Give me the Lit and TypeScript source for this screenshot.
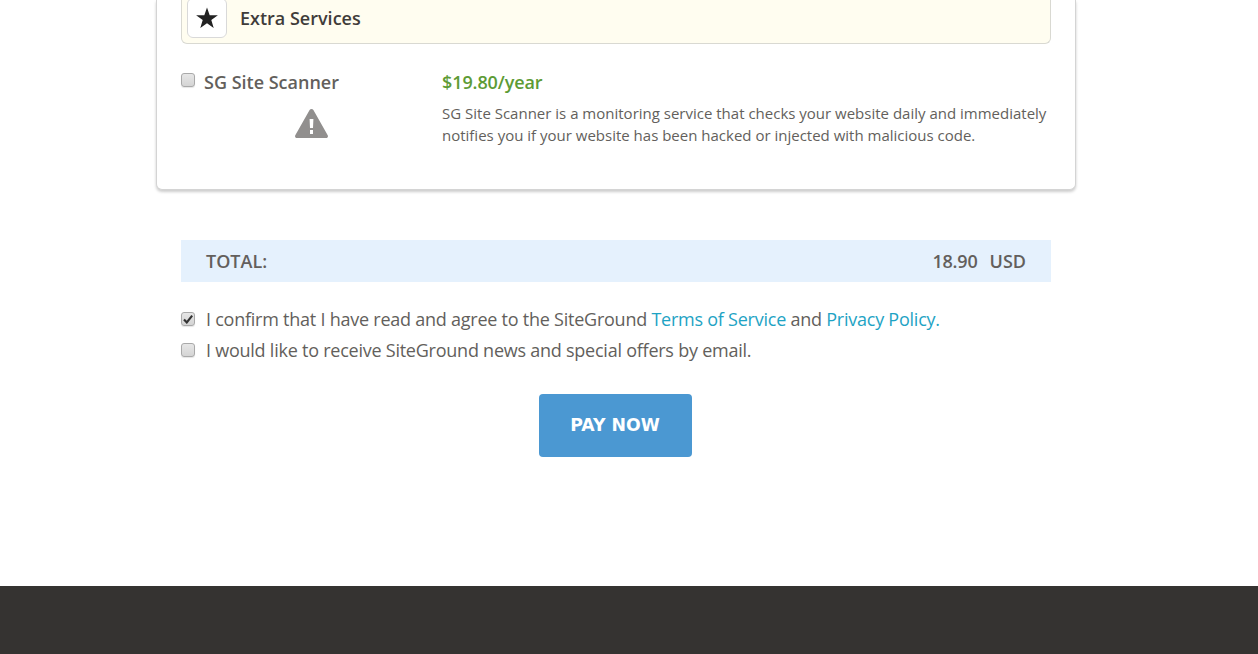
import { LitElement, html, css } from 'lit';
import { customElement } from 'lit/decorators.js';

const box = (checked = false) => html`
  <span class="box">
    ${checked
      ? html`<svg width="10" height="10" viewBox="0 0 10 10"><path d="M1 5.4 L3.8 8.4 L9.2 1.6" fill="none" stroke="#333" stroke-width="2.2"/></svg>`
      : ''}
  </span>
`;

@customElement('app-root')
export class AppRoot extends LitElement {
  static styles = css`
    :host {
      display: block;
      height: 654px;
      overflow: hidden;
      background: #fff;
      color: #635f5c;
      font-family: 'Open Sans', 'DejaVu Sans', sans-serif;
    }
    .page {
      display: flex;
      flex-direction: column;
      height: 654px;
    }
    .main {
      flex: 1;
      width: 870px;
      margin-left: 181px;
    }
    .card {
      box-sizing: border-box;
      width: 920px;
      height: 190px;
      margin-left: -25px;
      padding: 0 24px;
      background: #fff;
      border: 1px solid #d4d4d4;
      border-top: 0;
      border-radius: 0 0 6px 6px;
      box-shadow: 0 2px 3px rgba(0, 0, 0, 0.2);
    }
    .extra {
      box-sizing: border-box;
      display: flex;
      align-items: flex-end;
      gap: 13px;
      width: 870px;
      height: 44px;
      padding: 0 5px 5px;
      background: #fffdf0;
      border: 1px solid #d9d9d2;
      border-top: 0;
      border-radius: 0 0 6px 6px;
      overflow: hidden;
    }
    .star {
      box-sizing: border-box;
      flex: none;
      display: flex;
      align-items: center;
      justify-content: center;
      width: 40px;
      height: 40px;
      background: #fff;
      border: 1px solid #d9d9d9;
      border-radius: 6px;
    }
    .extra h3 {
      margin: 0 0 7px;
      font-size: 18px;
      line-height: 26px;
      font-weight: 600;
      color: #3f3c3a;
    }
    .service {
      display: grid;
      grid-template-columns: 261px 1fr;
      padding-top: 25px;
    }
    .name {
      display: flex;
      gap: 9px;
      font-size: 18px;
      line-height: 26px;
      font-weight: 600;
    }
    .box {
      box-sizing: border-box;
      flex: none;
      display: flex;
      align-items: center;
      justify-content: center;
      width: 14px;
      height: 14px;
      border: 1px solid #a9a9a9;
      border-radius: 3px;
      background: linear-gradient(#e6e6e6, #d4d4d4);
      box-shadow: 0 1px 1px rgba(0, 0, 0, 0.1);
    }
    .name .box {
      margin-top: 4px;
    }
    .warn {
      display: block;
      margin: 14px 0 0 114px;
    }
    .price {
      font-size: 18px;
      line-height: 26px;
      font-weight: 600;
      letter-spacing: -0.1px;
      color: #5d9b35;
    }
    .desc {
      margin: 7px 0 0;
      font-size: 15px;
      line-height: 22px;
      white-space: nowrap;
    }
    .total {
      display: flex;
      justify-content: space-between;
      margin-top: 50px;
      padding: 0 25px;
      height: 42px;
      align-items: center;
      background: #e5f1fd;
      font-size: 18px;
      font-weight: 600;
    }
    .sum {
      display: flex;
      gap: 12px;
    }
    .amount {
      letter-spacing: -0.2px;
    }
    .agree {
      display: flex;
      flex-direction: column;
      gap: 5px;
      margin-top: 24px;
    }
    .line {
      display: flex;
      align-items: center;
      gap: 11px;
      font-size: 18px;
      line-height: 26px;
      letter-spacing: -0.24px;
      white-space: nowrap;
    }
    a {
      color: #1ea3c4;
      text-decoration: none;
    }
    .actions {
      display: flex;
      justify-content: center;
      margin-top: 31px;
      padding-right: 2px;
    }
    button {
      width: 153px;
      height: 63px;
      padding: 0 0 2px;
      border: 0;
      border-radius: 4px;
      background: #4b98d2;
      color: #fff;
      font-family: 'DejaVu Sans', sans-serif;
      font-size: 17.3px;
      font-weight: 700;
      cursor: pointer;
    }
    footer {
      flex: none;
      height: 68px;
      background: #353331;
    }
  `;

  render() {
    return html`
      <div class="page">
        <div class="main">
          <section class="card">
            <div class="extra">
              <span class="star">
                <svg width="24" height="24" viewBox="0 0 24 24"><path fill="#222" d="M12 1.6 L14.7 9.2 L22.9 9.2 L16.3 14.1 L18.7 22 L12 17.2 L5.3 22 L7.7 14.1 L1.1 9.2 L9.3 9.2 Z"/></svg>
              </span>
              <h3>Extra Services</h3>
            </div>
            <div class="service">
              <div>
                <div class="name">${box()}<span>SG Site Scanner</span></div>
                <svg class="warn" width="33" height="29" viewBox="0 0 33 29">
                  <path fill="#918f8e" fill-rule="evenodd" d="M16.5 0 C17.3 0 18 .4 18.4 1.1 L32.7 26.2 C33.4 27.4 32.6 29 31.1 29 L1.9 29 C.4 29 -.4 27.4 .3 26.2 L14.6 1.1 C15 .4 15.7 0 16.5 0 Z M14.6 10 L15 19 L18 19 L18.4 10 Z M15 21 L15 25 L18 25 L18 21 Z"/>
                </svg>
              </div>
              <div>
                <div class="price">$19.80/year</div>
                <p class="desc">SG Site Scanner is a monitoring service that checks your website daily and immediately<br />notifies you if your website has been hacked or injected with malicious code.</p>
              </div>
            </div>
          </section>
          <div class="total">
            <span>TOTAL:</span>
            <span class="sum"><span class="amount">18.90</span><span>USD</span></span>
          </div>
          <div class="agree">
            <div class="line">${box(true)}<span>I confirm that I have read and agree to the SiteGround <a href="#">Terms of Service</a> and <a href="#">Privacy Policy.</a></span></div>
            <div class="line">${box()}<span>I would like to receive SiteGround news and special offers by email.</span></div>
          </div>
          <div class="actions"><button>PAY NOW</button></div>
        </div>
        <footer></footer>
      </div>
    `;
  }
}
